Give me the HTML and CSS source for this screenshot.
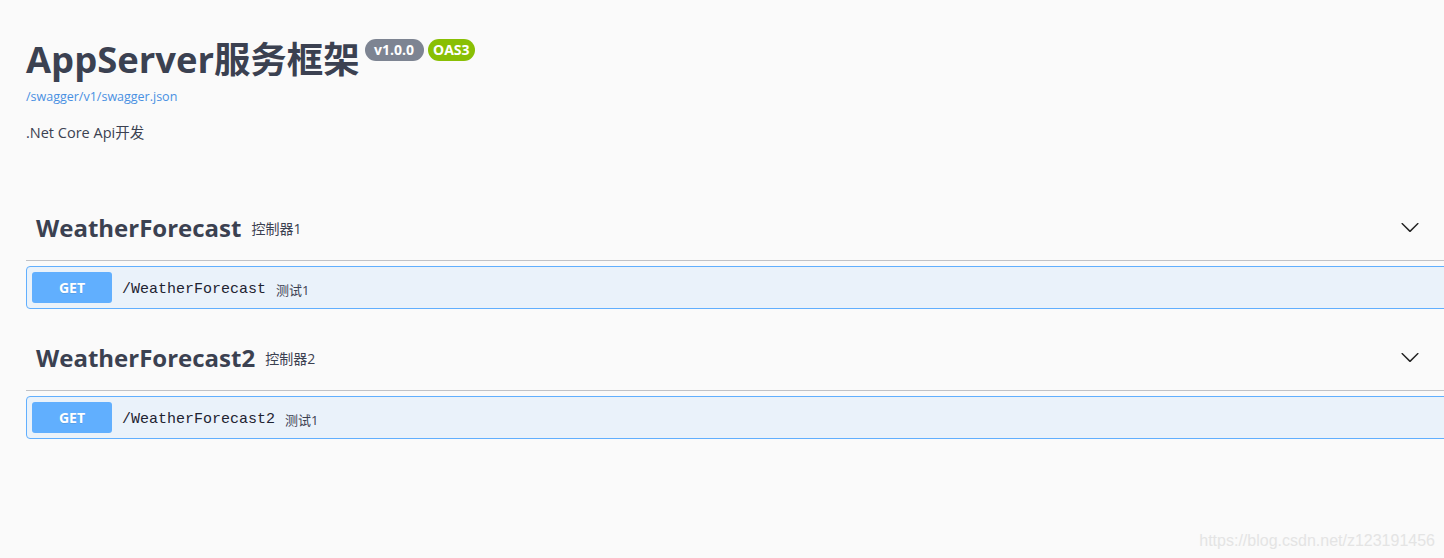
FILE: index.html
```html
<!DOCTYPE html>
<html lang="zh-CN">
<head>
<meta charset="utf-8">
<title>AppServer服务框架</title>
<link rel="stylesheet" href="styles.css">
</head>
<body>
<div class="wrapper">
  <div class="info">
    <div class="title-row">
      <h2 class="title">AppServer服务框架</h2>
      <span class="badge">v1.0.0</span>
      <span class="badge badge-oas">OAS3</span>
    </div>
    <a class="spec-link" href="#">/swagger/v1/swagger.json</a>
    <p class="description">.Net Core Api开发</p>
  </div>

  <section class="tag-section first">
    <div class="tag">
      <span class="tag-name">WeatherForecast</span>
      <span class="tag-desc">控制器1</span>
      <svg class="arrow" width="20" height="20" viewBox="0 0 20 20"><path d="M17.418 6.109c.272-.268.709-.268.979 0s.271.701 0 .969l-7.908 7.83c-.27.268-.707.268-.979 0l-7.908-7.830c-.27-.268-.27-.701 0-.969.271-.268.709-.268.979 0L10 13.25l7.418-7.141z"/></svg>
    </div>
    <div class="opblock">
      <span class="method">GET</span>
      <span class="path">/WeatherForecast</span>
      <span class="op-desc">测试1</span>
    </div>
  </section>

  <section class="tag-section">
    <div class="tag">
      <span class="tag-name">WeatherForecast2</span>
      <span class="tag-desc">控制器2</span>
      <svg class="arrow" width="20" height="20" viewBox="0 0 20 20"><path d="M17.418 6.109c.272-.268.709-.268.979 0s.271.701 0 .969l-7.908 7.83c-.27.268-.707.268-.979 0l-7.908-7.830c-.27-.268-.27-.701 0-.969.271-.268.709-.268.979 0L10 13.25l7.418-7.141z"/></svg>
    </div>
    <div class="opblock">
      <span class="method">GET</span>
      <span class="path">/WeatherForecast2</span>
      <span class="op-desc">测试1</span>
    </div>
  </section>
</div>
<div class="watermark">https://blog.csdn.net/z123191456</div>
</body>
</html>
```
FILE: styles.css
```css
html, body {
  margin: 0;
  padding: 0;
}
body {
  background: #fafafa;
  font-family: "Open Sans", "Noto Sans CJK SC", sans-serif;
  color: #3b4151;
  overflow: hidden;
  width: 1444px;
  height: 558px;
  position: relative;
}
.wrapper {
  padding-left: 26px;
  width: 1424px;
}
.info {
  padding-top: 41px;
}
.title-row {
  display: flex;
  align-items: flex-start;
}
.title {
  margin: 0;
  font-size: 36.4px;
  line-height: 36px;
  font-weight: 700;
  color: #3b4151;
}
.badge {
  margin-top: -2px;
  margin-left: 5px;
  height: 22px;
  line-height: 22px;
  padding: 0 9.5px;
  border-radius: 57px;
  background: #7d8492;
  color: #fff;
  font-size: 14px;
  font-weight: 700;
}
.badge-oas {
  margin-left: 4px;
  padding: 0 5.5px;
  background: #89bf04;
}
.spec-link {
  display: block;
  margin-top: 12px;
  font-size: 12.5px;
  line-height: 16px;
  color: #4990e2;
  text-decoration: none;
}
.description {
  margin: 18px 0 0;
  font-size: 14.5px;
  line-height: 20px;
}
.tag-section.first {
  margin-top: 53px;
}
.tag-section {
  margin-top: 17px;
}
.tag {
  display: flex;
  align-items: center;
  box-sizing: border-box;
  height: 65px;
  padding: 0 30px 2px 10px;
  border-bottom: 1px solid rgba(59, 65, 81, 0.3);
}
.tag-name {
  font-size: 24px;
  font-weight: 700;
}
.tag-desc {
  margin-left: 10px;
  font-size: 14px;
  margin-top: 1px;
}
.arrow {
  margin-left: auto;
  fill: #222;
}
.opblock {
  margin-top: 5px;
  display: flex;
  align-items: center;
  padding: 5px 5px 5px;
  border: 1px solid #61affe;
  border-radius: 4px;
  background: rgba(97, 175, 254, 0.1);
}
.method {
  width: 80px;
  height: 31px;
  line-height: 31px;
  text-align: center;
  border-radius: 3px;
  background: #61affe;
  color: #fff;
  font-size: 14px;
  font-weight: 700;
  text-shadow: 0 1px 0 rgba(0, 0, 0, 0.1);
}
.path {
  margin-left: 10px;
  margin-top: 4px;
  font-family: "Liberation Mono", monospace;
  font-size: 15px;
  font-weight: 400;
  color: #1f2432;
}
.op-desc {
  margin-left: 10px;
  margin-top: 3px;
  font-size: 13px;
  color: #3b4151;
}
.watermark {
  position: absolute;
  right: 9px;
  bottom: 8px;
  font-family: "Liberation Sans", sans-serif;
  font-size: 16px;
  color: #e4e4e4;
}
```
